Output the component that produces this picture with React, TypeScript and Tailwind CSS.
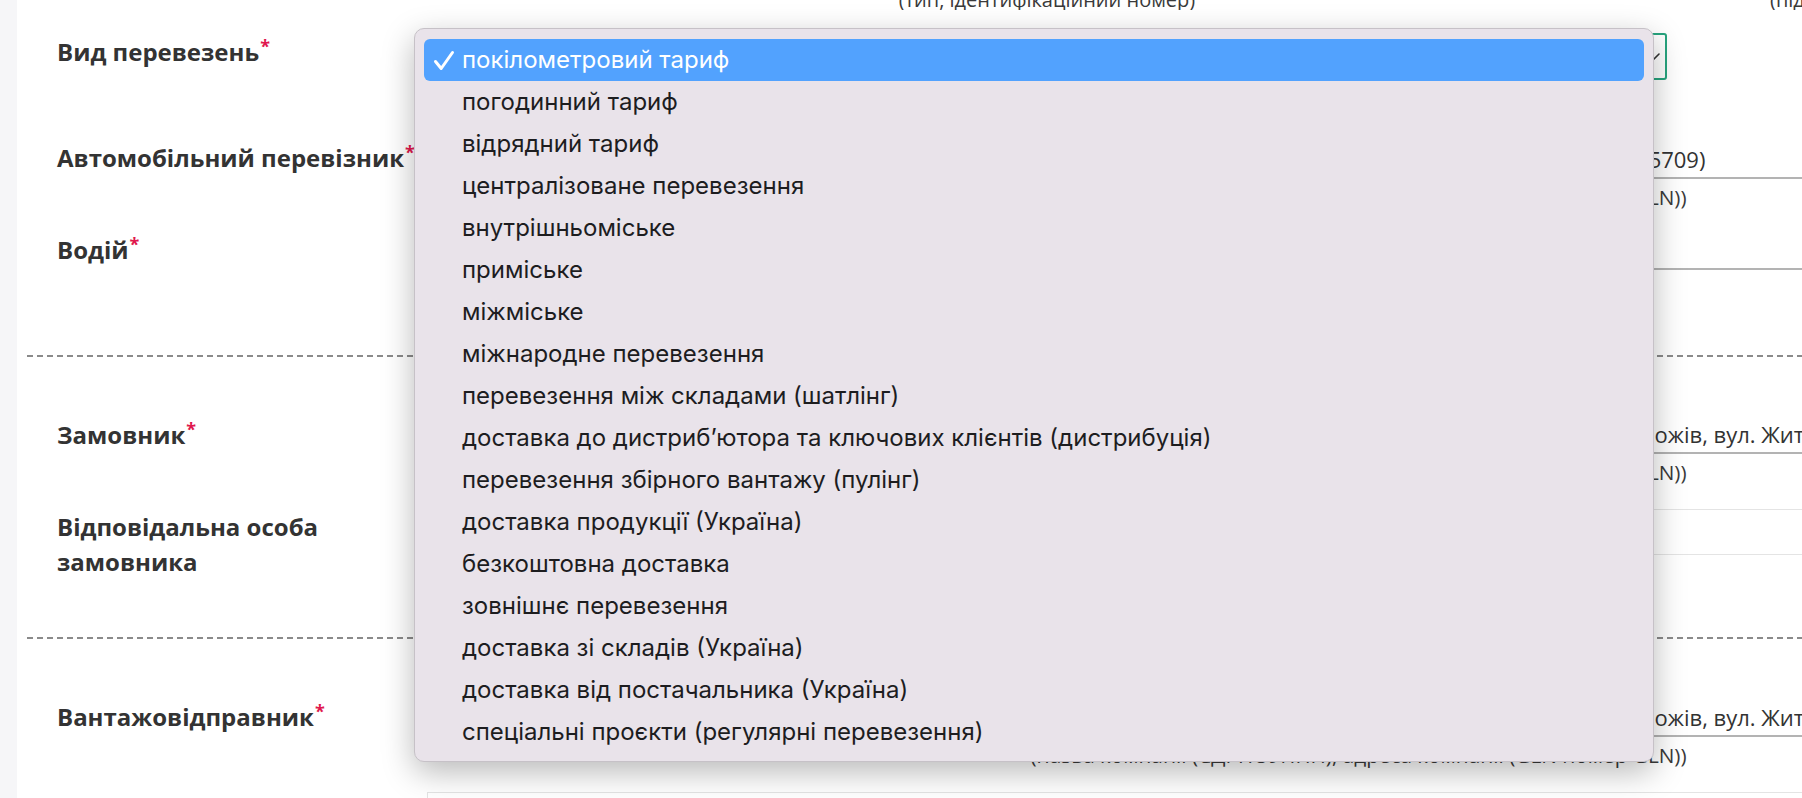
import React from "react";

const options = [
  "покілометровий тариф",
  "погодинний тариф",
  "відрядний тариф",
  "централізоване перевезення",
  "внутрішньоміське",
  "приміське",
  "міжміське",
  "міжнародне перевезення",
  "перевезення між складами (шатлінг)",
  "доставка до дистриб’ютора та ключових клієнтів (дистрибуція)",
  "перевезення збірного вантажу (пулінг)",
  "доставка продукції (Україна)",
  "безкоштовна доставка",
  "зовнішнє перевезення",
  "доставка зі складів (Україна)",
  "доставка від постачальника (Україна)",
  "спеціальні проєкти (регулярні перевезення)",
];

const companyHint = "(назва компанії (ЄДРПОУ/ІПН), адреса компанії (GLN номер GLN))";
const companyValue =
  "ТОВ «Агрохолдинг Поділля» (ЄДРПОУ 38451276), Україна, 08010, Київська обл., с. Рожів, вул. Житомирська, 12";

const Label = ({ children }: { children: React.ReactNode }) => (
  <div className="text-[24px] font-bold leading-[35px] text-[#333]">
    {children}
    <span className="relative -top-[8px] ml-[1px] text-[18px] text-[#e0174d]">*</span>
  </div>
);

const Value = ({ text }: { text?: string }) => (
  <div className="h-[35px] overflow-hidden whitespace-nowrap border-b-2 border-[#b3b3b3] text-center text-[22px] leading-[30px] text-[#333]">
    {text}
  </div>
);

const Hint = ({ text }: { text: string }) => (
  <div className="mt-[5px] whitespace-nowrap text-center text-[20.75px] leading-[26px] text-[#3a3a3a]">{text}</div>
);

const Dashed = () => (
  <div className="h-[2px] bg-[repeating-linear-gradient(to_right,#8a8a8a_0_6px,transparent_6px_10px)]" />
);

const NativeMenu = () => (
  <div className="absolute left-[414px] top-[28px] w-[1240px] rounded-[10px] border border-[#c6c1c7] bg-[#e9e3ea] px-[9px] pb-[8px] pt-[10px] font-['Inter','Liberation_Sans',sans-serif] text-[24px] shadow-[0_10px_32px_rgba(0,0,0,0.28)]">
    {options.map((o, i) => (
      <div
        key={o}
        className={
          i === 0
            ? "flex h-[42px] items-center rounded-[6px] bg-[#52a2fe] text-white"
            : "flex h-[42px] items-center rounded-[6px] text-[#1d1d1f]"
        }
      >
        <span className="flex w-[38px] shrink-0 justify-start pl-[9px]">
          {i === 0 && (
            <svg width="22" height="21" viewBox="0 0 22 21" fill="none">
              <path d="M2.5 11.5 L8.2 18.5 L19.5 2.5" stroke="white" strokeWidth="3" strokeLinecap="round" strokeLinejoin="round" />
            </svg>
          )}
        </span>
        <span className="whitespace-nowrap">{o}</span>
      </div>
    ))}
  </div>
);

const App = () => {
  return (
    <div className="relative h-[798px] w-full overflow-hidden bg-white font-['Open_Sans','Noto_Sans',sans-serif] text-[#333]">
      <div className="flex h-full">
        <div className="w-[17px] shrink-0 bg-[#f6f6f8]" />
        <div className="min-w-0 flex-1 pl-[10px]">
          {/* hints of the row above, cut by the top edge */}
          <div className="flex h-[10px] overflow-hidden">
            <div className="w-[400px] shrink-0" />
            <div className="flex shrink-0 -mt-[13px] text-[20px] leading-[26px] text-[#3a3a3a]">
              <div className="w-[1240px] text-center">(тип, ідентифікаційний номер)</div>
              <div className="pl-[103px] whitespace-nowrap">(підрозділ)</div>
            </div>
          </div>

          {/* Вид перевезень */}
          <div className="flex h-[90px]">
            <div className="w-[400px] shrink-0 pl-[30px] pt-[24px]">
              <Label>Вид перевезень</Label>
            </div>
            <div className="shrink-0 pt-[23px]">
              <div className="flex h-[47px] w-[1240px] items-center justify-end rounded-[3px] border-2 border-[#27a47e] pr-[5px]">
                <svg width="14" height="8" viewBox="0 0 14 8" fill="none">
                  <path d="M1 1 L7 7 L13 1" stroke="#333" strokeWidth="1.6" strokeLinecap="round" strokeLinejoin="round" />
                </svg>
              </div>
            </div>
          </div>

          {/* Автомобільний перевізник */}
          <div className="flex h-[130px]">
            <div className="w-[400px] shrink-0 pl-[30px] pt-[40px]">
              <Label>Автомобільний перевізник</Label>
            </div>
            <div className="w-[1863px] shrink-0 pt-[44px]">
              <Value text="ТОВ «Західтранслогістик Груп Україна Плюс» (ЄДРПОУ 43125709)" />
              <Hint text={companyHint} />
            </div>
          </div>

          {/* Водій */}
          <div className="flex h-[125px]">
            <div className="w-[400px] shrink-0 pl-[30px] pt-[2px]">
              <Label>Водій</Label>
            </div>
            <div className="w-[1863px] shrink-0 pt-[5px]">
              <Value />
              <Hint text="(прізвище, ім’я, по батькові)" />
            </div>
          </div>

          <Dashed />

          {/* Замовник */}
          <div className="flex h-[152px]">
            <div className="w-[400px] shrink-0 pl-[30px] pt-[60px]">
              <Label>Замовник</Label>
            </div>
            <div className="w-[1863px] shrink-0 pt-[62px]">
              <Value text={companyValue} />
              <Hint text={companyHint} />
            </div>
          </div>

          {/* Відповідальна особа замовника */}
          <div className="flex h-[128px]">
            <div className="w-[400px] shrink-0 pl-[30px] pr-[20px]">
              <div className="text-[24px] font-bold leading-[35px] text-[#333]">Відповідальна особа замовника</div>
            </div>
            <div className="w-[1863px] shrink-0">
              <div className="h-[46px] border border-[#e4e4e4]" />
            </div>
          </div>

          <Dashed />

          {/* Вантажовідправник */}
          <div className="flex">
            <div className="w-[400px] shrink-0 pl-[30px] pt-[60px]">
              <Label>Вантажовідправник</Label>
            </div>
            <div className="w-[1863px] shrink-0 pt-[63px]">
              <Value text={companyValue} />
              <Hint text={companyHint} />
              <div className="mt-[24px] h-[44px] border border-[#e4e4e4]" />
            </div>
          </div>
        </div>
      </div>

      <NativeMenu />
    </div>
  );
};

export default App;
